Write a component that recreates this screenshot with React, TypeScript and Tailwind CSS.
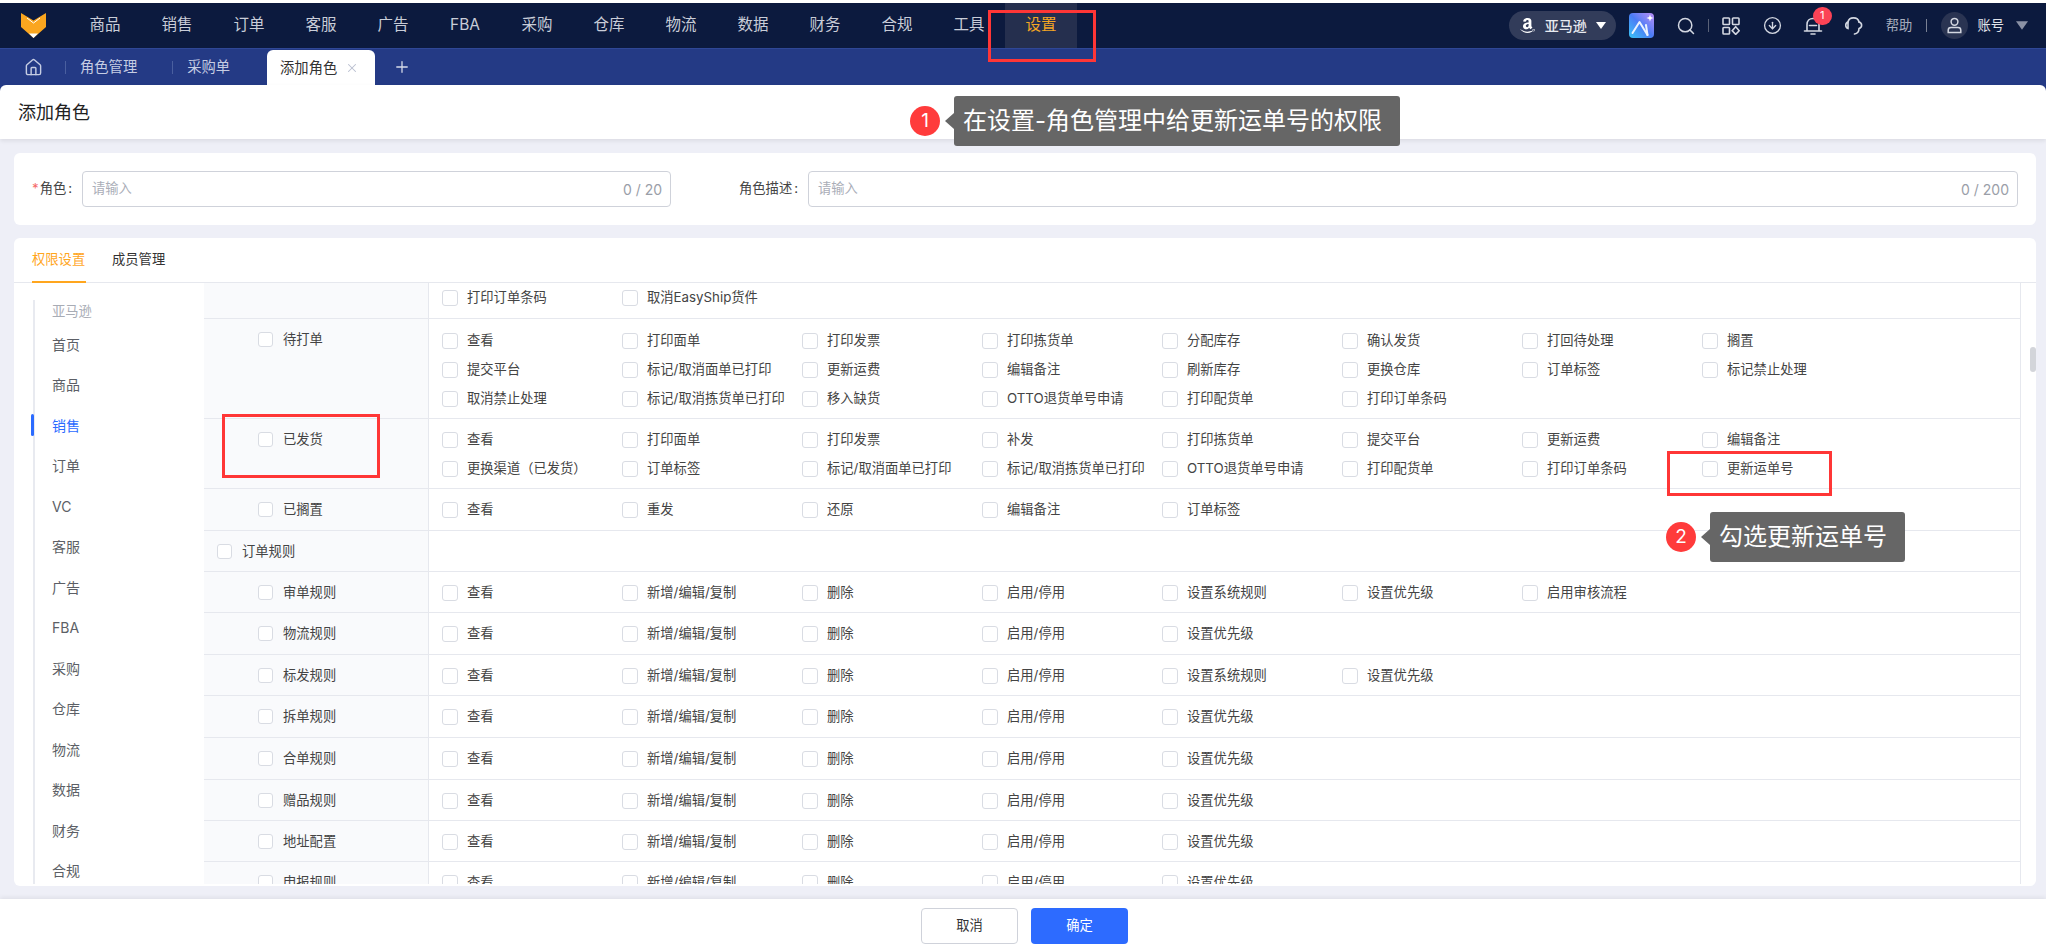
import React from "react";
import { FaAmazon } from "react-icons/fa";
import { House, Plus, X, Search, CircleArrowDown } from "lucide-react";

const FONT = "font-['Inter','Noto_Sans_CJK_SC',sans-serif]";
const nav = ["商品", "销售", "订单", "客服", "广告", "FBA", "采购", "仓库", "物流", "数据", "财务", "合规", "工具"];
const side = ["首页", "商品", "销售", "订单", "VC", "客服", "广告", "FBA", "采购", "仓库", "物流", "数据", "财务", "合规"];

type Row = { label: string; level: 0 | 1 | 2; h: string; pt: string; items: string[] };
const base = ["查看", "新增/编辑/复制", "删除", "启用/停用"];
const rows: Row[] = [
  { label: "", level: 0, h: "h-[36px]", pt: "pt-0", items: ["打印订单条码", "取消EasyShip货件"] },
  {
    label: "待打单", level: 2, h: "h-[100px]", pt: "pt-[7px]",
    items: ["查看", "打印面单", "打印发票", "打印拣货单", "分配库存", "确认发货", "打回待处理", "搁置", "提交平台", "标记/取消面单已打印", "更新运费", "编辑备注", "刷新库存", "更换仓库", "订单标签", "标记禁止处理", "取消禁止处理", "标记/取消拣货单已打印", "移入缺货", "OTTO退货单号申请", "打印配货单", "打印订单条码"],
  },
  {
    label: "已发货", level: 2, h: "h-[70px]", pt: "pt-[6px]",
    items: ["查看", "打印面单", "打印发票", "补发", "打印拣货单", "提交平台", "更新运费", "编辑备注", "更换渠道（已发货）", "订单标签", "标记/取消面单已打印", "标记/取消拣货单已打印", "OTTO退货单号申请", "打印配货单", "打印订单条码", "更新运单号"],
  },
  { label: "已搁置", level: 2, h: "h-[42px]", pt: "pt-[6px]", items: ["查看", "重发", "还原", "编辑备注", "订单标签"] },
  { label: "订单规则", level: 1, h: "h-[41px]", pt: "pt-[6px]", items: [] },
  { label: "审单规则", level: 2, h: "h-[41px]", pt: "pt-[6px]", items: [...base, "设置系统规则", "设置优先级", "启用审核流程"] },
  { label: "物流规则", level: 2, h: "h-[42px]", pt: "pt-[6px]", items: [...base, "设置优先级"] },
  { label: "标发规则", level: 2, h: "h-[41px]", pt: "pt-[6px]", items: [...base, "设置系统规则", "设置优先级"] },
  { label: "拆单规则", level: 2, h: "h-[42px]", pt: "pt-[6px]", items: [...base, "设置优先级"] },
  { label: "合单规则", level: 2, h: "h-[42px]", pt: "pt-[6px]", items: [...base, "设置优先级"] },
  { label: "赠品规则", level: 2, h: "h-[41px]", pt: "pt-[6px]", items: [...base, "设置优先级"] },
  { label: "地址配置", level: 2, h: "h-[41px]", pt: "pt-[6px]", items: [...base, "设置优先级"] },
  { label: "申报规则", level: 2, h: "h-[42px]", pt: "pt-[6px]", items: [...base, "设置优先级"] },
];

function Box({ small }: { small?: boolean }) {
  return <span className={`block shrink-0 bg-white border border-[#d9dce3] rounded-[3px] ${small ? "w-[15px] h-[15px]" : "w-[16px] h-[16px]"}`} />;
}

function Logo() {
  return (
    <svg width="26" height="26" viewBox="0 0 26 26" className="shrink-0">
      <path d="M0 0 L12.5 7.5 L25 0 L25 14 L12.5 25 L0 14 Z" fill="#fba61f" />
      <path d="M6 5 L12.5 10 L19 5" fill="none" stroke="#fff" strokeWidth="1" />
      <path d="M8 20.5 L17 20.5 L12.5 25 Z" fill="#fff" />
    </svg>
  );
}

function AiIcon() {
  return (
    <div className="w-[25px] h-[25px] rounded-[4px] bg-gradient-to-tr from-[#38c3f5] via-[#4a7cf6] to-[#b98df6] flex items-center justify-center">
      <svg width="25" height="25" viewBox="0 0 25 25" fill="none">
        <path d="M3.5 20 L10.5 9 L18.5 22" stroke="#eaf2ff" strokeWidth="2" strokeLinejoin="round" strokeLinecap="round" />
        <path d="M17 12 L18.5 22" stroke="#eaf2ff" strokeWidth="2" strokeLinecap="round" />
        <path d="M21 1.5 L21.9 4.1 L24.5 5 L21.9 5.9 L21 8.5 L20.1 5.9 L17.5 5 L20.1 4.1 Z" fill="#fff" />
      </svg>
    </div>
  );
}

function AppsIcon() {
  return (
    <svg width="18" height="18" viewBox="0 0 18 18" fill="none" stroke="#d3d7e1" strokeWidth="1.6">
      <rect x="1" y="1" width="6.5" height="6.5" rx="0.8" />
      <rect x="10.5" y="1" width="6.5" height="6.5" rx="0.8" />
      <rect x="1" y="10.5" width="6.5" height="6.5" rx="0.8" />
      <path d="M13.7 9.8 L17.2 13.7 L13.7 17.4 L10.2 13.7 Z" />
    </svg>
  );
}

function BellIcon() {
  return (
    <svg width="20" height="20" viewBox="0 0 20 20" fill="none" stroke="#d3d7e1" strokeWidth="1.6" strokeLinecap="round">
      <path d="M4 14.5 V8.5 C4 5 6.5 2.5 10 2.5 C13.5 2.5 16 5 16 8.5 V14.5" />
      <path d="M1.5 15 H18.5" />
      <path d="M6.5 9.5 H13.5" />
      <path d="M8 18 H12" />
    </svg>
  );
}

function Headset() {
  return (
    <svg width="19" height="19" viewBox="0 0 19 19" fill="none" stroke="#d3d7e1" strokeWidth="1.6" strokeLinecap="round">
      <path d="M4 6 C5 0.5 14 0.5 15 6" />
      <path d="M4 6 C1 7 1 11.5 4 12.5 Z" />
      <path d="M15 6 C18.5 7 18.5 11.5 15 12.5 C15 15.5 13.5 17.5 10.5 18" />
    </svg>
  );
}

function UserIcon() {
  return (
    <svg width="17" height="17" viewBox="0 0 17 17" fill="none" stroke="#d3d7e1" strokeWidth="1.5">
      <circle cx="8.5" cy="4.8" r="3.4" />
      <path d="M2.2 15.5 V13.2 C2.2 11.4 3.6 10.6 5 10.6 H12 C13.4 10.6 14.8 11.4 14.8 13.2 V15.5 Z" />
    </svg>
  );
}

function Caret({ color, size = 9 }: { color: string; size?: number }) {
  return (
    <svg width={size + 1} height={size - 2} viewBox="0 0 10 7">
      <path d="M0 0 H10 L5 7 Z" fill={color} />
    </svg>
  );
}

function TopNav() {
  return (
    <div className="h-[45px] mt-[3px] bg-[#0c1a3e] flex items-center pl-[21px] shrink-0">
      <Logo />
      <div className="flex ml-[22px] h-full">
        {nav.map((n) => (
          <div key={n} className="w-[72px] h-full flex items-center justify-center text-[15.5px] text-[#c9cdd8] pb-[2px]">{n}</div>
        ))}
        <div className="w-[72px] h-full flex items-center justify-center text-[15.5px] text-[#f5a623] bg-[#252f4e] pb-[2px]">设置</div>
      </div>
      <div className="ml-auto flex items-center pr-[18px]">
        <div className="w-[107px] h-[29px] rounded-full bg-[#323c5a] flex items-center pl-[11px] text-white">
          <FaAmazon className="text-[17px] w-[15px]" />
          <span className="ml-[10px] text-[14px] font-medium text-[#e8eaf0]">亚马逊</span>
          <span className="ml-[9px]"><Caret color="#fff" /></span>
        </div>
        <div className="ml-[13px]"><AiIcon /></div>
        <Search className="ml-[22px] w-[20px] h-[20px] text-[#d3d7e1]" strokeWidth={1.8} />
        <span className="ml-[12px] w-px h-[13px] bg-[#5a6278]" />
        <div className="ml-[13px]"><AppsIcon /></div>
        <CircleArrowDown className="ml-[23px] w-[19px] h-[19px] text-[#d3d7e1]" strokeWidth={1.7} />
        <div className="relative ml-[21px]">
          <BellIcon />
          <span className="absolute -top-[9px] left-[10px] w-[19px] h-[18px] rounded-full bg-[#fb4356] text-white text-[11px] flex items-center justify-center">1</span>
        </div>
        <div className="ml-[21px]"><Headset /></div>
        <span className="ml-[23px] text-[13.3px] text-[#a9afbf]">帮助</span>
        <span className="ml-[14px] w-px h-[13px] bg-[#7a8194]" />
        <div className="ml-[14px] w-[27px] h-[27px] rounded-full bg-[#2a3452] flex items-center justify-center"><UserIcon /></div>
        <span className="ml-[9px] text-[13.3px] text-[#e0e3ea]">账号</span>
        <span className="ml-[12px]"><Caret color="#8a91a5" size={11} /></span>
      </div>
    </div>
  );
}

function TabBar() {
  return (
    <div className="h-[37px] bg-[#243a85] border-t border-[#2f4796] flex items-end shrink-0 text-[14.3px] text-[#c6cde3]">
      <div className="h-full flex items-center pl-[24px]">
        <House className="w-[19px] h-[19px] text-[#c6cde3]" strokeWidth={1.8} />
        <span className="ml-[22px] w-px h-[13px] bg-[#4a5f9f]" />
        <span className="ml-[14px]">角色管理</span>
        <span className="ml-[35px] w-px h-[13px] bg-[#4a5f9f]" />
        <span className="ml-[14px]">采购单</span>
      </div>
      <div className="ml-[37px] w-[108px] h-[35px] bg-white rounded-t-[6px] flex items-center pl-[13px] text-[#333]">
        添加角色
        <X className="ml-[8px] w-[14px] h-[14px] text-[#b9bfd0]" strokeWidth={1.8} />
      </div>
      <div className="h-full flex items-center ml-[18px]"><Plus className="w-[18px] h-[18px] text-[#d6dbea]" strokeWidth={1.7} /></div>
    </div>
  );
}

function Field({ label, req, cls, count, labelCls }: { label: string; req?: boolean; cls: string; count: string; labelCls: string }) {
  return (
    <div className={`flex items-center ${cls}`}>
      <span className={`text-[13.3px] text-[#444] whitespace-nowrap ${labelCls}`}>
        {req && <span className="text-[#f56c6c] mr-[1px]">*</span>}{label}<span className="ml-[2px]">:</span>
      </span>
      <div className="flex-1 h-[36px] border border-[#cfd2da] rounded-[4px] flex items-center justify-between pl-[9px] pr-[8px] text-[13.3px] bg-white">
        <span className="text-[#aaaeb8]">请输入</span>
        <span className="text-[#9a9ea8] text-[14px]">{count}</span>
      </div>
    </div>
  );
}

function Sidebar() {
  return (
    <div className="w-[190px] shrink-0 pt-[17px] pl-[19px]">
      <div className="border-l-2 border-[#e8eaf0] pl-[17px] h-[600px] relative">
        <div className="h-[24px] flex items-center text-[13.3px] text-[#a8acb5]">亚马逊</div>
        <div className="flex flex-col">
          {side.map((s) => (
            <div key={s} className={`relative h-[40.5px] flex items-center text-[14px] ${s === "销售" ? "text-[#2b6bff]" : "text-[#5c5f66]"}`}>
              {s === "销售" && <span className="absolute -left-[21px] top-[9px] w-[3px] h-[22px] rounded-[2px] bg-[#2b6bff]" />}
              {s}
            </div>
          ))}
        </div>
      </div>
    </div>
  );
}

function PermRow({ r }: { r: Row }) {
  return (
    <div className={`flex border-b border-[#e6e8ee] shrink-0 ${r.h}`}>
      <div className="w-[225px] shrink-0 bg-[#f9fafc] border-r border-[#e6e8ee]">
        {r.level === 2 && (
          <div className="flex items-center pl-[54px] pt-[11px] gap-[10px] text-[13.3px] text-[#444]">
            <Box small />
            <span className="whitespace-nowrap">{r.label}</span>
          </div>
        )}
        {r.level === 1 && (
          <div className="flex items-center pl-[13px] pt-[11px] gap-[10px] text-[13.3px] text-[#444]">
            <Box small />
            <span className="whitespace-nowrap">{r.label}</span>
          </div>
        )}
      </div>
      <div className={`grid grid-cols-[repeat(8,180px)] pl-[13px] content-start ${r.pt}`}>
        {r.items.map((it, i) => (
          <div key={i} className="h-[29px] flex items-center text-[13.3px] text-[#444] whitespace-nowrap gap-[9px]">
            <Box />
            <span>{it}</span>
          </div>
        ))}
      </div>
    </div>
  );
}

function Callout({ n, text, cls, w }: { n: string; text: string; cls: string; w: string }) {
  return (
    <div className={`absolute flex items-center h-[50px] ${cls}`}>
      <span className="w-[30px] h-[30px] rounded-full bg-[#ff3b3b] text-white text-[19px] flex items-center justify-center">{n}</span>
      <span className="ml-[5px] w-0 h-0 border-y-[8px] border-y-transparent border-r-[9px] border-r-[#666666]" />
      <div className={`h-[50px] rounded-[3px] bg-[#666666] text-white text-[24px] flex items-center pl-[9px] whitespace-nowrap ${w}`}>{text}</div>
    </div>
  );
}

export default function App() {
  return (
    <div className={`relative w-[2046px] h-[947px] overflow-hidden bg-white flex flex-col ${FONT}`}>
      <TopNav />
      <TabBar />
      <div className="bg-[#243a85] shrink-0">
        <div className="h-[54px] bg-white rounded-t-[6px] flex items-center pl-[18px] text-[18px] text-[#222] shadow-[0_2px_4px_rgba(0,0,0,0.08)] relative">添加角色</div>
      </div>
      <div className="flex-1 min-h-0 bg-[#eeeff7] pl-[14px] pr-[10px] pt-[14px] flex flex-col">
        <div className="h-[72px] bg-white rounded-[6px] flex items-center shrink-0 pl-[18px] pr-[18px]">
          <Field label="角色" req count="0 / 20" cls="w-[639px]" labelCls="w-[50px]" />
          <Field label="角色描述" count="0 / 200" cls="flex-1 ml-[68px]" labelCls="w-[69px]" />
        </div>
        <div className="mt-[13px] h-[648px] bg-white rounded-[6px] flex flex-col shrink-0 overflow-hidden">
          <div className="h-[45px] border-b border-[#e6e8ee] flex items-end pl-[18px] text-[13.3px] shrink-0">
            <div className="h-full flex items-center border-b-2 border-[#ffa61e] text-[#ffa61e] w-[54px] -mb-px whitespace-nowrap">权限设置</div>
            <div className="h-full flex items-center text-[#333] ml-[26px]">成员管理</div>
          </div>
          <div className="flex h-[601px] overflow-hidden relative">
            <Sidebar />
            <div className="w-[1817px] border-r border-[#e6e8ee] shrink-0 border-l-0 flex flex-col overflow-hidden">
              {rows.map((r, i) => <PermRow key={i} r={r} />)}
            </div>
            <div className="absolute right-0 top-[64px] w-[6px] h-[25px] rounded-[3px] bg-[#d3d5da]" />
          </div>
        </div>
      </div>
      <div className="h-[48px] shrink-0 bg-white flex items-start justify-center pt-[9px] pl-[3px] gap-[13px] text-[13.3px] shadow-[0_-2px_4px_rgba(0,0,0,0.06)] relative">
        <button className="w-[97px] h-[36px] rounded-[4px] border border-[#cfd2da] bg-white text-[#333]">取消</button>
        <button className="w-[97px] h-[36px] rounded-[4px] bg-[#2d6bff] text-white">确定</button>
      </div>

      <div className="absolute left-[988px] top-[10px] w-[108px] h-[52px] border-[3px] border-[#ff3636]" />
      <div className="absolute left-[222px] top-[414px] w-[158px] h-[64px] border-[3px] border-[#ff3636]" />
      <div className="absolute left-[1667px] top-[451px] w-[165px] h-[45px] border-[3px] border-[#ff3636]" />
      <Callout n="1" text="在设置-角色管理中给更新运单号的权限" cls="left-[910px] top-[96px]" w="w-[446px]" />
      <Callout n="2" text="勾选更新运单号" cls="left-[1666px] top-[512px]" w="w-[195px]" />
    </div>
  );
}
